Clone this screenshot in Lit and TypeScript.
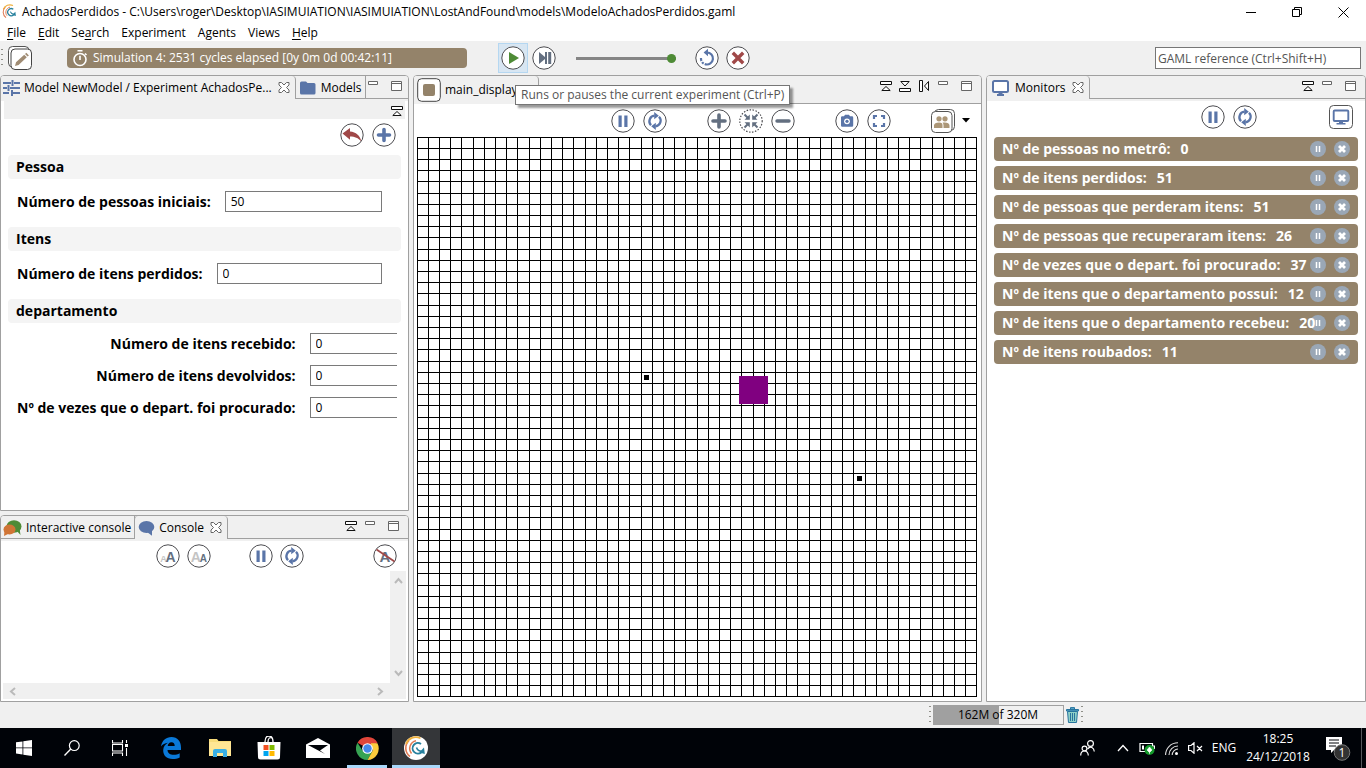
import { LitElement, html, svg, css } from "lit";
import { customElement, property } from "lit/decorators.js";

const BLUE = "#5a75a8";
const SLATE = "#636f80";
const BROWN = "#94836a";
const RED = "#a04848";
const GREEN = "#4e8b36";

const ring = svg`<circle cx="12" cy="12" r="11.2" fill="#fff" stroke="#4c4c50" stroke-width="1"/>`;
const dottedRing = svg`<circle cx="12" cy="12" r="11.2" fill="#fff" stroke="#4c4c50" stroke-width="1.2" stroke-dasharray="1.5 1.5"/>`;
const letterA = (x: number, y: number, s: number, fill: string) => svg`
  <text x=${x} y=${y} font-family="Liberation Sans" font-weight="bold" font-size=${s} text-anchor="middle" fill=${fill}>A</text>`;

const GLYPHS: Record<string, unknown> = {
  pause: svg`${ring}<path d="M7.500 6.500h3.200v11.500H7.500zM13.300 6.500h3.200v11.500h-3.200z" fill=${BLUE}/>`,
  sync: svg`${ring}<g fill="none" stroke=${BLUE} stroke-width="2.300"><path d="M8 16.200A5.600 5.600 0 0 1 11.500 6.700"/><path d="M16 7.800A5.600 5.600 0 0 1 12.500 17.300"/></g>
    <path d="M11.200 3l4.600 3.700-4.600 3.600zM12.800 13.700v7.300L8.200 17.300z" fill=${BLUE}/>`,
  play: svg`${ring}<path d="M8 6l10 6-10 6z" fill=${GREEN}/>`,
  step: svg`${ring}<path d="M7 6l6 5V6h2v12h-2v-5l-6 5zM16.200 6h3v12h-3z" fill=${SLATE}/>`,
  reload: svg`${ring}<path d="M12 6.500a6 6 0 1 1-5.700 4" fill="none" stroke=${BLUE} stroke-width="2.200" stroke-dasharray="21 1.200 2 1.200 3"/><path d="M13 2.800v7.400L8.600 6.500z" fill=${BLUE}/>`,
  stop: svg`${ring}<path d="M6.800 6.800l10.400 10.400M17.200 6.800L6.800 17.200" stroke=${RED} stroke-width="3.400"/>`,
  plus: svg`${ring}<path d="M12 6v12M6 12h12" stroke=${SLATE} stroke-width="3.600" stroke-linecap="round"/>`,
  plusBlue: svg`${ring}<path d="M12 6.500v11M6.500 12h11" stroke=${BLUE} stroke-width="3.600" stroke-linecap="round"/>`,
  minus: svg`${ring}<path d="M6 12h12" stroke=${SLATE} stroke-width="3.400" stroke-linecap="round"/>`,
  fit: svg`${dottedRing}<g fill="none" stroke=${SLATE} stroke-width="2"><path d="M5.500 5.500l4 4M18.500 5.500l-4 4M5.500 18.500l4-4M18.500 18.500l-4-4"/></g>
    <path d="M10.800 5.500v5.300H5.500zM13.200 5.500v5.300h5.300zM10.800 18.500v-5.300H5.500zM13.200 18.500v-5.300h5.300z" fill=${SLATE}/>`,
  undo: svg`${ring}<path d="M2.500 10.500L10 5v3.600c6 .4 10 4 11.400 9.800C18 14.800 15 13.600 10 13.500v3.200z" fill=${RED}/>`,
  camera: svg`${ring}<path d="M6 8.500q0-1.200 1.200-1.200H9L10 5.800h4l1 1.500h2q1.200 0 1.200 1.200v8q0 1.200-1.200 1.200H7.200Q6 17.700 6 16.500z" fill=${BLUE}/><circle cx="12" cy="12.300" r="2.900" fill="#fff"/><circle cx="12" cy="12.300" r="1.600" fill=${BLUE}/>`,
  expand: svg`${ring}<path d="M7 10V7h3M14 7h3v3M17 14v3h-3M10 17H7v-3" fill="none" stroke=${BLUE} stroke-width="2.200"/>`,
  bigger: svg`${ring}${letterA(7.5, 18, 9, "#c4c4c4")}${letterA(14.6, 18, 14, SLATE)}`,
  smaller: svg`${ring}${letterA(8.8, 18, 14, "#c4c4c4")}${letterA(16.3, 18, 10, SLATE)}`,
  wrap: svg`${ring}${letterA(12, 18, 15, SLATE)}<path d="M3.500 5.500l18 12" stroke=${RED} stroke-width="1.800"/>`,
  edit: svg`<rect x=".5" y=".5" width="20.500" height="20.500" rx="4" fill="#fff" stroke="#555"/><rect x="3" y="3" width="20.500" height="20.500" rx="4" fill="#fff" stroke="#444"/>
    <path d="M7 20l1-3.700 8.200-7.600 2.600 2.600-8.200 7.700zM17 8l1.300-1.200 2.600 2.600L19.600 10.600z" fill="#a08c74"/>`,
  people: svg`<rect x="3.500" y=".5" width="20" height="21" rx="4" fill="#fff" stroke="#555"/><rect x=".5" y="2.500" width="20.500" height="21" rx="4" fill="#fff" stroke="#555"/>
    <g fill="#ac9778"><circle cx="8" cy="9.800" r="2.600"/><circle cx="14" cy="9.800" r="2.600"/><path d="M3 19v-2.500c0-2 2-3 5-3s3.500 1 3.500 3V19zM12.500 19v-2.500q0-2-1-2.800c4-.7 7 .6 7 2.800V19z"/></g>`,
  screen: svg`<rect x=".5" y=".5" width="23" height="23" rx="4" fill="#fff" stroke="#555"/><rect x="4.700" y="5.500" width="14.600" height="10.500" rx="1" fill="#fff" stroke=${BLUE} stroke-width="1.900"/><path d="M10 16h4v2h2.500v1.600h-9V18H10z" fill=${BLUE}/>`,
  swatch: svg`<rect x=".7" y=".7" width="22.600" height="22.600" rx="4" fill="#fff" stroke="#444"/><rect x="6" y="6" width="12" height="12" rx="2" fill=${BROWN}/>`,
};

const GAMA = svg`<circle cx="12" cy="12" r="12" fill="#fff"/>
  <g fill="none"><path d="M6 20.500A10.500 10.500 0 0 1 5 4.500" stroke="#e07b54" stroke-width="1.600"/><path d="M2 8A10.500 10.500 0 0 1 16.500 2.300" stroke="#efb13e" stroke-width="1.800"/><path d="M7.500 17.500A8 8 0 0 1 12 4.700" stroke="#e07b54" stroke-width="1.500"/>
  <path d="M17 8a5.300 5.300 0 1 0 .5 8.200" stroke="#27819e" stroke-width="1.900"/><path d="M12.500 11.500c.8 2.500 3 3.800 5.500 4" stroke="#27819e" stroke-width="1.600"/></g><path d="M20 11.500l.8 6.500-5.500-1.500z" fill="#27819e"/>`;

const close = svg`<path d="M1 1.500h2.500L6 4l2.500-2.500H11V4L8.500 6.500 11 9v2.500H8.500L6 9l-2.500 2.500H1V9l2.500-2.500L1 4z" fill="#fff" stroke="#666" stroke-width="1"/>`;

const STRIP: Record<string, unknown> = {
  up: svg`<path d="M1.500 1.500h11v3h-11zM7 6.500L2.800 10.500h8.400z" fill="#fff" stroke="#111"/>`,
  down: svg`<path d="M1.500 8.500h11v3h-11zM7 6L2.800 1.500h8.400z" fill="#fff" stroke="#111"/>`,
  side: svg`<path d="M2.500 .5h3v11h-3zM11.500 1.500v9L7.500 6z" fill="#fff" stroke="#111"/>`,
  min: svg`<path d="M2.500 1.500h9v3h-9z" fill="#fff" stroke="#666"/>`,
  max: svg`<path d="M2.500 1.500h10v9h-10zM2.500 3.500h10" fill="#fff" stroke="#666"/>`,
};

@customElement("gama-icon-button")
class GamaIconButton extends LitElement {
  @property() icon = "";
  @property() label = "";
  static styles = css`
    :host { display: block; flex: none; }
    button { display: block; width: 24px; height: 24px; padding: 0; border: 0; background: none; }
    svg { display: block; width: 24px; height: 24px; overflow: visible; }
  `;
  render() {
    return html`<button aria-label=${this.label}><svg viewBox="0 0 24 24">${GLYPHS[this.icon]}</svg></button>`;
  }
}

interface Field { id: string; label: string; value: string; }
const MONITORS: [string, string][] = [
  ["Nº de pessoas no metrô:", "0"],
  ["Nº de itens perdidos:", "51"],
  ["Nº de pessoas que perderam itens:", "51"],
  ["Nº de pessoas que recuperaram itens:", "26"],
  ["Nº de vezes que o depart. foi procurado:", "37"],
  ["Nº de itens que o departamento possui:", "12"],
  ["Nº de itens que o departamento recebeu:", "20"],
  ["Nº de itens roubados:", "11"],
];
const DEPARTMENT: Field[] = [
  { id: "received", label: "Número de itens recebido:", value: "0" },
  { id: "returned", label: "Número de itens devolvidos:", value: "0" },
  { id: "sought", label: "Nº de vezes que o depart. foi procurado:", value: "0" },
];
const MENUS: [string, string, string][] = [
  ["", "F", "ile"], ["", "E", "dit"], ["Se", "a", "rch"], ["Experiment", "", ""], ["Agents", "", ""], ["Views", "", ""], ["", "H", "elp"],
];

const btn = (icon: string, label: string) => html`<gama-icon-button icon=${icon} label=${label}></gama-icon-button>`;
const strip = (...names: string[]) => html`<div class="strip">${names.map(
  (n) => html`<button class="mini" aria-label=${n}><svg viewBox="0 0 14 12" width="14" height="12">${STRIP[n]}</svg></button>`)}</div>`;
const closeBtn = html`<button class="tabclose" aria-label="Close"><svg viewBox="0 0 12 13" width="12" height="13">${close}</svg></button>`;

@customElement("app-root")
class AppRoot extends LitElement {
  static styles = css`
    :host { display: flex; flex-direction: column; height: 100vh; overflow: hidden; background: #f0f0f0; color: #000;
      font: 12px/16px "Open Sans", "Noto Sans", sans-serif; }
    * { box-sizing: border-box; }
    button { font: inherit; color: inherit; border: 0; padding: 0; background: none; }
    svg { display: block; flex: none; }
    .titlebar { display: flex; align-items: center; height: 24px; flex: none; background: #fff; padding-left: 2px; white-space: nowrap; }
    .titlebar svg { margin-right: 4px; }
    .grow { flex: 1; }
    .win { width: 46px; height: 20px; display: grid; place-items: center; }
    .titlebar .win svg { margin: 0; }
    .menus { display: flex; flex: none; height: 17px; background: #fff; gap: 12px; padding-left: 7px; }
    .menus u { text-underline-offset: 2px; }
    .toolbar { display: flex; align-items: center; flex: none; height: 34px; padding-right: 5px; }
    .grip { width: 4px; height: 22px; flex: none; background: radial-gradient(circle, #8f8f88 1px, transparent 1px) 0 0 / 4px 5px; }
    .toolbar .grip { margin-right: 4px; }
    .sim { display: flex; align-items: center; gap: 5px; width: 400px; height: 20px; margin: 0 31px 0 35px; padding-left: 5px; border-radius: 4px; background: #94836a; color: #fff; }
    .hot { width: 30px; height: 30px; display: grid; place-items: center; background: #d8e6f2; border: 1px solid #b5d7f1; margin-right: 4px; }
    .speed { appearance: none; width: 100px; height: 12px; margin: 0 19px 0 20px; background: linear-gradient(#858585, #858585) center / 100% 3px no-repeat; }
    .speed::-webkit-slider-thumb { appearance: none; width: 9px; height: 9px; border-radius: 50%; background: #4e8b36; }
    .gap7 { width: 7px; }
    .search { width: 206px; height: 22px; border: 1px solid #767676; background: #fff; font: inherit; padding: 0 2px; }
    .search::placeholder { color: #555; opacity: 1; }
    main { flex: 1; min-height: 0; display: grid; grid-template-columns: 409fr 569fr 380fr; gap: 4px; }
    .left { display: grid; grid-template-rows: 436fr 187fr; gap: 4px; min-width: 0; min-height: 0; }
    .panel { border: 1px solid #a0a0a0; border-radius: 4px 4px 0 0; background: #fff; display: flex; flex-direction: column; min-width: 0; min-height: 0; overflow: hidden; }
    .tabs { display: flex; flex: none; height: 23px; background: #f0f0f0; white-space: nowrap; box-shadow: inset 0 -1px #a0a0a0; }
    .tab { display: flex; align-items: center; gap: 4px; padding: 0 3px 0 2px; border-right: 1px solid #a0a0a0; height: 23px; flex: none; }
    .tab.on { background: #f0f0f0; border-radius: 0 4px 0 0; }
    .tab + .tab { padding-left: 3px; }
    .tab + .tab.on { border-left: 1px solid #a0a0a0; border-radius: 4px 4px 0 0; margin-left: -1px; }
    .tab.on .tabclose { margin: 0 2px; }
    .band { height: 2px; flex: none; background: #f0f0f0; }
    .strip { display: flex; align-items: flex-start; gap: 5px; margin-left: auto; padding: 4px 8px 0 0; }
    .mini { width: 14px; height: 12px; }
    .mini + .mini:last-child { margin-left: 4px; }
    .viewbar { display: flex; justify-content: flex-end; height: 18px; flex: none; background: #f0f0f0; margin: 0 3px; }
    .viewbar .strip { padding-right: 1px; }
    .tools { display: flex; flex: none; justify-content: flex-end; align-items: center; gap: 8px; }
    .tools.form { height: 31px; padding-right: 12px; }
    .params { padding-top: 5px; }
    .section { height: 24px; margin: 0 7px 12px; padding-left: 8px; border-radius: 4px; background: #f4f4f4; font: bold 14px/24px "Open Sans", sans-serif; }
    .field { display: flex; align-items: center; gap: 14px; height: 21px; margin: 0 26px 15px 16px; font: bold 14px/21px "Open Sans", sans-serif; white-space: nowrap; }
    .field input, .dept input { flex: 1; min-width: 0; width: 100%; height: 21px; border: 1px solid #7a7a7a; padding: 0 5px; background: #fff; font: 12px "Open Sans", sans-serif; }
    .dept { display: grid; grid-template-columns: auto 1fr; gap: 11px 14px; margin: -2px 11px 0 16px; font: bold 14px/21px "Open Sans", sans-serif; text-align: right; white-space: nowrap; }
    .dept input { border-right: 0; }
    .tools.console { height: 30px; gap: 7px; padding-right: 11px; }
    .sp24 { width: 24px; }
    .sp55 { width: 55px; }
    .sp56 { width: 56px; }
    .log { flex: 1; min-height: 0; margin: 0 2px 2px; display: grid; grid-template: 1fr 16px / 1fr 16px; }
    .vs { background: #f0f0f0; display: flex; flex-direction: column; justify-content: space-between; align-items: center; padding: 5px 0; }
    .hs { background: #f0f0f0; display: flex; justify-content: space-between; align-items: center; padding: 0 5px; }
    .corner { background: #f0f0f0; }
    .tabs.tall { height: 28px; }
    .tall .tab { height: 28px; padding: 0 20px 0 3px; }
    .tools.display { height: 33px; padding-right: 7px; }
    .arrow { width: 16px; display: grid; place-items: center; height: 24px; margin-left: -5px; }
    .world { flex: 1; min-height: 0; margin: 0 4px 4px 3px; }
    .world svg { width: 100%; height: 100%; }
    .tools.mon { height: 31px; padding-right: 12px; }
    .list { display: grid; gap: 5px; margin: 5px 7px 0; }
    .monitor { display: flex; align-items: center; gap: 8px; height: 24px; padding: 0 8px; border-radius: 4px; background: #94836a; color: #fff; font: bold 14px/24px "Open Sans", sans-serif; }
    .monitor .txt { flex: 1; width: 0; white-space: nowrap; position: relative; z-index: 1; display: flex; gap: 10px; }
    .monitor button { width: 16px; height: 16px; flex: none; }
    .status { display: flex; flex: none; height: 26px; align-items: center; justify-content: flex-end; padding-right: 282px; }
    .heap { width: 131px; height: 20px; margin-left: 1px; border: 1px solid #a0a0a0; border-left: 0; text-align: center; line-height: 18px; background: linear-gradient(90deg, #a0a0a0 66px, #f0f0f0 66px); }
    .trash { width: 16px; height: 20px; display: grid; place-items: center; }
    .taskbar { display: flex; flex: none; height: 40px; background: #000308; color: #fff; }
    .task { width: 48px; height: 40px; display: grid; place-items: center; margin-right: 1px; flex: none; }
    .task.sys { margin: 0; }
    .task.first { margin-left: 3px; }
    .task.run { background: linear-gradient(#a9d8fb, #a9d8fb) center bottom / 40px 3px no-repeat; }
    .task.cur { background: linear-gradient(#a9d8fb, #a9d8fb) bottom / 100% 3px no-repeat #343639; }
    .tray { display: flex; align-items: center; margin-left: auto; }
    .tray button { display: grid; place-items: center; }
    .people { width: 48px; }
    .tr { width: 24px; }
    .lang { width: 34px; }
    .clock { width: 74px; text-align: center; line-height: 18px; }
    .notif { width: 46px; }
    .peek { width: 5px; height: 40px; border-left: 1px solid #55585c; }
    .tip { position: absolute; left: 515px; top: 85px; height: 20px; line-height: 18px; padding: 0 5px; border: 1px solid #767676; background: #fff; color: #555; box-shadow: 3px 3px 2px #0006; white-space: nowrap; }
  `;

  private grid() {
    const at = (i: number) => Math.min(559, Math.floor(i * 11.2));
    const lines = Array.from({ length: 51 }, (_, i) => at(i));
    return svg`<g shape-rendering="crispEdges">
      ${lines.map((p) => svg`<rect x=${p} y="0" width="1" height="560"/><rect x="0" y=${p} width="560" height="1"/>`)}
      <rect x="322" y="239" width="29" height="28" fill="#800080"/>
      <rect x="227" y="238" width="5" height="5"/><rect x="440" y="339" width="5" height="5"/></g>`;
  }

  private tools() {
    return html`
      <header class="toolbar">
        <div class="grip"></div>
        ${btn("edit", "Edit model")}
        <div class="sim" role="status">
          <svg width="16" height="18" viewBox="0 0 16 18"><g fill="none" stroke="#fff" stroke-width="1.600"><circle cx="8" cy="10.500" r="6"/><path d="M5.500 1.700h5M8 6.800V11M13 4.500l1.500 1.500"/></g></svg>
          <span>Simulation 4: 2531 cycles elapsed [0y 0m 0d 00:42:11]</span>
        </div>
        <div class="hot">${btn("play", "Run")}</div>
        ${btn("step", "Step")}
        <input class="speed" type="range" min="0" max="100" value="100" aria-label="Speed">
        ${btn("reload", "Reload")}<div class="gap7"></div>${btn("stop", "Close experiment")}
        <div class="grow"></div>
        <input class="search" type="text" placeholder="GAML reference (Ctrl+Shift+H)" aria-label="GAML reference">
      </header>`;
  }

  private parameters() {
    return html`
      <section class="panel">
        <div class="tabs">
          <div class="tab on"><svg width="17" height="16" viewBox="0 0 17 16"><path d="M0 3h8M11 3h6M0 8h4M7 8h10M0 13h6M9 13h8M9.500 0v6M5.500 5v6M9 10v6" stroke=${BLUE} stroke-width="2" fill="none"/></svg>
            <span>Model NewModel / Experiment AchadosPe...</span>${closeBtn}</div>
          <div class="tab"><svg width="18" height="14" viewBox="0 0 18 14"><path d="M1 2q0-1.500 1.500-1.500H7L8.500 2H15q1.500 0 1.500 1.500V12q0 1.500-1.500 1.500H2.500Q1 13.500 1 12z" fill=${BLUE}/></svg>
            <span>Models</span></div>
          ${strip("min", "max")}
        </div>
        <div class="band"></div>
        <div class="viewbar">${strip("up")}</div>
        <div class="tools form">${btn("undo", "Revert")}${btn("plusBlue", "Add simulation")}</div>
        <div class="params">
          <div class="section">Pessoa</div>
          <div class="field"><label for="people">Número de pessoas iniciais:</label><input id="people" type="text" .value=${"50"}></div>
          <div class="section">Itens</div>
          <div class="field"><label for="lost">Número de itens perdidos:</label><input id="lost" type="text" .value=${"0"}></div>
          <div class="section">departamento</div>
          <div class="dept">${DEPARTMENT.map((f) => html`<label for=${f.id}>${f.label}</label><input id=${f.id} type="text" .value=${f.value}>`)}</div>
        </div>
      </section>`;
  }

  private console() {
    const chev = (d: string) => html`<svg width="9" height="9" viewBox="0 0 9 9"><path d=${d} fill="none" stroke="#bababa" stroke-width="2"/></svg>`;
    return html`
      <section class="panel">
        <div class="tabs">
          <div class="tab"><svg width="19" height="16" viewBox="0 0 19 16"><ellipse cx="11" cy="6.500" rx="7.500" ry="6.200" fill=${GREEN}/><path d="M13 10l4.500 5-1-7z" fill=${GREEN}/><ellipse cx="6.500" cy="9.500" rx="6" ry="5" fill="#d07536"/><path d="M1.500 11l-.5 5 5-2.500z" fill="#d07536"/></svg><span>Interactive console</span></div>
          <div class="tab on"><svg width="17" height="16" viewBox="0 0 17 16"><ellipse cx="8.500" cy="7" rx="7.800" ry="6" fill=${BLUE}/><path d="M9 12l5 3.800V10z" fill=${BLUE}/></svg><span>Console</span>${closeBtn}</div>
          ${strip("up", "min", "max")}
        </div>
        <div class="band"></div>
        <div class="tools console">${btn("bigger", "Increase font size")}${btn("smaller", "Decrease font size")}<div class="sp24"></div>${btn("pause", "Pause")}${btn("sync", "Synchronize")}<div class="sp55"></div>${btn("wrap", "Clear")}</div>
        <div class="log"><div></div><div class="vs">${chev("M1 7l3.500-4L8 7")}${chev("M1 2l3.500 4L8 2")}</div>
          <div class="hs">${chev("M7 1L3 4.500 7 8")}${chev("M2 1l4 3.500L2 8")}</div><div class="corner"></div></div>
      </section>`;
  }

  private display() {
    return html`
      <section class="panel">
        <div class="tabs tall"><div class="tab on">${btn("swatch", "Display")}<span>main_display</span></div>${strip("up", "down", "side", "min", "max")}</div>
        <div class="tools display">
          ${btn("pause", "Pause")}${btn("sync", "Synchronize")}<div class="sp24"></div>
          ${btn("plus", "Zoom in")}${btn("fit", "Zoom to fit")}${btn("minus", "Zoom out")}<div class="sp24"></div>
          ${btn("camera", "Snapshot")}${btn("expand", "Full screen")}<div class="sp24"></div>
          ${btn("people", "Agents")}<button class="arrow" aria-label="More"><svg width="8" height="5"><path d="M0 0h8L4 4.500z"/></svg></button>
        </div>
        <div class="world"><svg viewBox="0 0 560 560" preserveAspectRatio="xMidYMin meet" role="img" aria-label="main_display">${this.grid()}</svg></div>
      </section>`;
  }

  private monitors() {
    return html`
      <section class="panel">
        <div class="tabs">
          <div class="tab on"><svg width="22" height="16" viewBox="-2 0 22 16"><rect x="2" y="1" width="15" height="11" rx="1.500" fill="#fff" stroke=${BLUE} stroke-width="2"/><path d="M7.500 12h4v2h1.500v2H6v-2h1.500z" fill=${BLUE}/></svg><span>Monitors</span>${closeBtn}</div>
          ${strip("up", "min", "max")}
        </div>
        <div class="band"></div>
        <div class="tools mon">${btn("pause", "Pause")}${btn("sync", "Synchronize")}<div class="sp56"></div>${btn("screen", "New monitor")}</div>
        <div class="list">${MONITORS.map(([k, v]) => html`
          <div class="monitor"><div class="txt"><span>${k}</span><span>${v}</span></div>
            <button aria-label="Pause"><svg width="16" height="16"><circle cx="8" cy="8" r="8" fill="#9aa7b6"/><path d="M6.500 5v6M9.500 5v6" stroke="#fff" stroke-width="1.500"/></svg></button>
            <button aria-label="Close"><svg width="16" height="16"><circle cx="8" cy="8" r="8" fill="#9aa7b6"/><path d="M5 5l6 6M11 5l-6 6" stroke="#fff" stroke-width="2.800"/></svg></button>
          </div>`)}</div>
      </section>`;
  }

  private taskbar() {
    return html`
      <footer class="taskbar">
        <button class="task sys" aria-label="Start"><svg width="16" height="16" viewBox="0 0 16 16"><path d="M0 2.300l6.500-.9v6.100H0zM7.300 1.300L16 0v7.500H7.300zM0 8.300h6.500v6.200L0 13.600zM7.300 8.300H16V16l-8.700-1.300z" fill="#fff"/></svg></button>
        <button class="task sys" aria-label="Search"><svg width="16" height="16" viewBox="0 0 16 16"><circle cx="10.300" cy="5.600" r="4.900" fill="none" stroke="#fff" stroke-width="1.200"/><path d="M6.800 9L.5 15.500" stroke="#fff" stroke-width="1.400"/></svg></button>
        <button class="task sys" aria-label="Task view"><svg width="16" height="16" viewBox="0 0 16 16"><path d="M.5 0v3h10V0M.5 16v-3h10v3M.5 4.500h10v6.500H.5zM14.500 0v3M14.500 8v8" fill="none" stroke="#fff" stroke-width="1.100"/><path d="M13 4h3v3h-3z" fill="#fff"/></svg></button>
        <button class="task first" aria-label="Edge"><svg width="20" height="22" viewBox="0 0 20 22"><path d="M0 9.500C1 3.500 5 0 10.500 0 16.500 0 20 4.500 20 10.500V13H6.500c.2 3.500 3 4.800 6 4.800 2.400 0 4.600-.7 6.200-1.600v4.300c-2 1-4.500 1.500-7.200 1.500C5.500 22 2 18.200 2.200 13 2.400 9.500 4.500 7 7 5.800 4 6 1.500 7.500 0 9.500zM6.700 9h7c0-2.200-1-3.800-3.300-3.800C8.200 5.200 7 7 6.700 9z" fill="#0a79d8"/></svg></button>
        <button class="task" aria-label="Explorer"><svg width="22" height="18" viewBox="0 0 22 18"><path d="M0 0h8l1.500 2H22v15H0z" fill="#f8dc7a"/><path d="M0 3h22v14H0z" fill="#ffe694"/><path d="M4 18v-6q0-2 2-2h10q2 0 2 2v6h-4v-4H8v4z" fill="#3aafe4"/></svg></button>
        <button class="task" aria-label="Store"><svg width="24" height="24" viewBox="0 0 24 24"><path d="M.500 6h23l-.5 15q0 2.500-2.500 2.500h-17Q1 23.500 1 21z" fill="#fff"/><path d="M8 6c0-6 3-6 4-6s4 0 4 6M11 6c0-4 2-5 4-4" fill="none" stroke="#fff" stroke-width="1.300"/><path d="M6.500 9h5v5h-5z" fill="#f25022"/><path d="M12.500 9h5v5h-5z" fill="#7fba00"/><path d="M6.500 15h5v5h-5z" fill="#00a4ef"/><path d="M12.500 15h5v5h-5z" fill="#ffb900"/></svg></button>
        <button class="task" aria-label="Mail"><svg width="24" height="20" viewBox="0 0 24 20"><path d="M0 6.500L12 0l12 6.500V20H0z" fill="#fff"/><path d="M2 7h20l-8 5.500 5 3.500z" fill="#000308"/></svg></button>
        <button class="task run" aria-label="Chrome"><svg width="23" height="23" viewBox="0 0 24 24"><path d="M12 12L1.600 6A12 12 0 0 1 22.400 6z" fill="#e0453a"/><path d="M1.600 6A12 12 0 0 0 12 24l5-9-5-3-5 2.500z" fill="#36a353"/><path d="M22.400 6.500A12 12 0 0 1 12 24l5.500-10-2-7.500z" fill="#fccc3c"/><circle cx="12" cy="12" r="5.600" fill="#fff"/><circle cx="12" cy="12" r="4.400" fill="#4688ea"/></svg></button>
        <button class="task cur" aria-label="GAMA"><svg width="24" height="24" viewBox="0 0 24 24">${GAMA}</svg></button>
        <div class="tray">
          <button class="people" aria-label="People"><svg width="15" height="16" viewBox="0 0 15 16"><g fill="none" stroke="#fff" stroke-width="1.200"><circle cx="10.500" cy="3.500" r="2.900"/><circle cx="4.500" cy="8.500" r="2.400"/><path d="M.7 15.500c0-6 7.600-6 7.600 0M7.500 9c3-3.500 6.500-1.500 6.800 2.500"/></g></svg></button>
          <button class="tr" aria-label="Hidden icons"><svg width="12" height="8"><path d="M1 7l5-5.500L11 7" fill="none" stroke="#fff" stroke-width="1.300"/></svg></button>
          <button class="tr" aria-label="Battery"><svg width="16" height="14" viewBox="0 0 16 14"><path d="M1 2.500h12.500v8H1zM14 5h1.500v3" fill="none" stroke="#fff" stroke-width="1.200"/><path d="M3 4.500h2v4H3z" fill="#fff"/><circle cx="10.500" cy="9" r="5" fill="#159a2c"/><path d="M10.500 6l2.500 3-2.500 2.500L8 9zM10.500 9v4" fill="#fff" stroke="#fff" stroke-width=".6"/></svg></button>
          <button class="tr" aria-label="Network"><svg width="13" height="13" viewBox="0 0 13 13"><g fill="none" stroke="#ddd" stroke-width="1.100"><path d="M.6 13C.6 6 6 .8 13 .8M4 13c0-5 4-9 9-9M7.200 13c0-3.200 2.600-6 5.800-6"/></g><circle cx="11.500" cy="11.500" r="1.500" fill="#fff"/></svg></button>
          <button class="tr" aria-label="Volume"><svg width="15" height="12" viewBox="0 0 15 12"><path d="M.6 3.500H3L6 .8v10.400L3 8.500H.6zM9 4l5 5M14 4L9 9" fill="none" stroke="#fff" stroke-width="1.200"/></svg></button>
          <button class="lang">ENG</button>
          <div class="clock">18:25<br>24/12/2018</div>
          <button class="notif" aria-label="Notifications"><svg width="26" height="26" viewBox="0 0 26 26"><path d="M1 2h16v13H9l-3 3v-3H1z" fill="#fff"/><path d="M4 5h10M4 8h10M4 11h7" stroke="#000308"/><circle cx="17" cy="17.500" r="7.800" fill="#333" stroke="#777"/><text x="17" y="22" font-size="12" text-anchor="middle" fill="#fff">1</text></svg></button>
          <div class="peek"></div>
        </div>
      </footer>`;
  }

  render() {
    return html`
      <div class="titlebar">
        <svg width="16" height="16" viewBox="0 0 24 24">${GAMA}</svg>
        <span>AchadosPerdidos - C:\\Users\\roger\\Desktop\\IASIMUIATION\\IASIMUIATION\\LostAndFound\\models\\ModeloAchadosPerdidos.gaml</span>
        <div class="grow"></div>
        <button class="win" aria-label="Minimize"><svg width="10" height="10"><path d="M0 5.500h10" stroke="#000"/></svg></button>
        <button class="win" aria-label="Restore"><svg width="10" height="10"><path d="M.5 2.500h7v7h-7zM2.500 2.500v-2h7v7h-2" fill="none" stroke="#000"/></svg></button>
        <button class="win" aria-label="Close"><svg width="11" height="11"><path d="M.5 .5l10 10M10.500 .5l-10 10" stroke="#000"/></svg></button>
      </div>
      <nav class="menus">${MENUS.map(([a, b, c]) => html`<button>${a}<u>${b}</u>${c}</button>`)}</nav>
      ${this.tools()}
      <main><div class="left">${this.parameters()}${this.console()}</div>${this.display()}${this.monitors()}</main>
      <div class="status"><div class="grip"></div><div class="heap">162M of 320M</div>
        <button class="trash" aria-label="Run garbage collector"><svg width="13" height="16" viewBox="0 0 13 16"><path d="M1.500 4.500h10l-1 11h-8z" fill="#8fd0c8" stroke="#27749e"/><path d="M4.500 6v8M6.500 6v8M8.500 6v8" stroke="#27749e"/><path d="M.5 2.500h12v1.500H.5zM4.500 2V.6h4V2" fill="#5aa6c8" stroke="#27749e"/></svg></button><div class="grip"></div></div>
      ${this.taskbar()}
      <div class="tip" role="tooltip">Runs or pauses the current experiment (Ctrl+P)</div>`;
  }
}
